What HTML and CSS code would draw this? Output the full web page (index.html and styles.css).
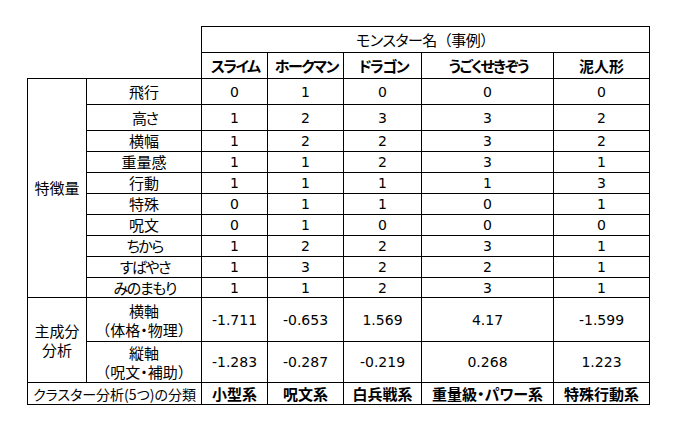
FILE: index.html
```html
<!DOCTYPE html>
<html lang="ja">
<head>
<meta charset="utf-8">
<title>モンスター分類</title>
<link rel="stylesheet" href="styles.css">
</head>
<body>
<table class="sheet">
  <colgroup>
    <col class="c-group">
    <col class="c-label">
    <col class="c-slime">
    <col class="c-hawk">
    <col class="c-dragon">
    <col class="c-golem">
    <col class="c-mud">
  </colgroup>
  <tr class="h26">
    <td class="blank" colspan="2" rowspan="2"></td>
    <td class="lab title" colspan="5">モンスター名<span class="fw">（</span>事例<span class="fw">）</span></td>
  </tr>
  <tr class="h26">
    <th class="kana">スライム</th>
    <th class="kana">ホークマン</th>
    <th class="kana">ドラゴン</th>
    <th class="kana">うごくせきぞう</th>
    <th>泥人形</th>
  </tr>
  <tr class="h26">
    <td class="lab" rowspan="10">特徴量</td>
    <td class="lab">飛行</td><td>0</td><td>1</td><td>0</td><td>0</td><td>0</td>
  </tr>
  <tr class="h26"><td class="lab kana">高さ</td><td>1</td><td>2</td><td>3</td><td>3</td><td>2</td></tr>
  <tr class="h21"><td class="lab">横幅</td><td>1</td><td>2</td><td>2</td><td>3</td><td>2</td></tr>
  <tr class="h21"><td class="lab">重量感</td><td>1</td><td>1</td><td>2</td><td>3</td><td>1</td></tr>
  <tr class="h21"><td class="lab">行動</td><td>1</td><td>1</td><td>1</td><td>1</td><td>3</td></tr>
  <tr class="h21"><td class="lab">特殊</td><td>0</td><td>1</td><td>1</td><td>0</td><td>1</td></tr>
  <tr class="h21"><td class="lab">呪文</td><td>0</td><td>1</td><td>0</td><td>0</td><td>0</td></tr>
  <tr class="h21"><td class="lab kana">ちから</td><td>1</td><td>2</td><td>2</td><td>3</td><td>1</td></tr>
  <tr class="h21"><td class="lab kana">すばやさ</td><td>1</td><td>3</td><td>2</td><td>2</td><td>1</td></tr>
  <tr class="h20"><td class="lab kana">みのまもり</td><td>1</td><td>1</td><td>2</td><td>3</td><td>1</td></tr>
  <tr class="h44">
    <td class="lab two" rowspan="2">主成分<br>分析</td>
    <td class="lab two">横軸<br><span class="fw">（</span>体格・物理<span class="fw">）</span></td>
    <td>-1.711</td><td>-0.653</td><td>1.569</td><td>4.17</td><td>-1.599</td>
  </tr>
  <tr class="h41">
    <td class="lab two">縦軸<br><span class="fw">（</span>呪文・補助<span class="fw">）</span></td>
    <td>-1.283</td><td>-0.287</td><td>-0.219</td><td>0.268</td><td>1.223</td>
  </tr>
  <tr class="h22">
    <td class="lab cluster" colspan="2">クラスター分析(5つ)の分類</td>
    <th>小型系</th>
    <th>呪文系</th>
    <th>白兵戦系</th>
    <th>重量級・パワー系</th>
    <th>特殊行動系</th>
  </tr>
</table>
</body>
</html>
```

FILE: styles.css
```css
html, body {
  background: #ffffff;
}
body {
  margin: 0;
  padding: 26px 0 0 27px;
  font-family: "Noto Sans CJK JP", "Noto Sans", sans-serif;
  font-size: 15px;
  color: #000000;
  font-feature-settings: "palt";
}
.sheet {
  border-collapse: collapse;
  table-layout: fixed;
  width: 622px;
}
.c-group { width: 59px; }
.c-label { width: 115px; }
.c-slime { width: 66px; }
.c-hawk { width: 76px; }
.c-dragon { width: 78px; }
.c-golem { width: 132px; }
.c-mud { width: 96px; }

.sheet td,
.sheet th {
  border: 1px solid #000000;
  padding: 0;
  text-align: center;
  vertical-align: middle;
  line-height: 18px;
  white-space: nowrap;
  overflow: hidden;
}
/* numeric cells */
.sheet td {
  font-family: "DejaVu Sans", "Noto Sans CJK JP", sans-serif;
  font-size: 14px;
}
.sheet td.lab {
  font-family: "Noto Sans CJK JP", "Noto Sans", sans-serif;
  font-size: 15px;
}
.sheet th {
  font-weight: 700;
  font-size: 15px;
}
.sheet .kana {
  letter-spacing: -1.5px;
  text-indent: 1.5px;
}
.sheet td.title {
  letter-spacing: -0.5px;
}
.sheet td.blank {
  border: none;
}
.fw {
  font-feature-settings: normal;
}
.h26 { height: 26px; }
.h22 { height: 22px; }
.h21 { height: 21px; }
.h20 { height: 20px; }
.h44 { height: 44px; }
.h41 { height: 41px; }
.sheet td.two {
  line-height: 19px;
}
.sheet td.cluster {
  font-size: 14px;
  letter-spacing: 0;
}
```
